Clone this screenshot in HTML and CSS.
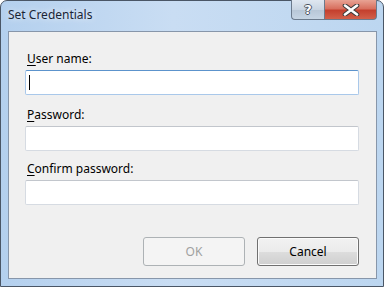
FILE: index.html
```html
<!DOCTYPE html>
<html>
<head>
<meta charset="utf-8">
<link rel="stylesheet" href="styles.css">
</head>
<body>
<div class="window">
  <div class="titlebar">
    <div class="title">Set Credentials</div>
    <div class="caption-buttons">
      <div class="cbtn help"><span class="help-glyph">?</span></div>
      <div class="cbtn close">
        <svg width="18" height="12" viewBox="0 0 18 12">
          <path d="M3 1.5 L15 10.5 M15 1.5 L3 10.5" stroke="#3c3c3c" stroke-width="4.6" stroke-linecap="round"/>
          <path d="M3 1.5 L15 10.5 M15 1.5 L3 10.5" stroke="#ffffff" stroke-width="2.6" stroke-linecap="round"/>
        </svg>
      </div>
    </div>
  </div>
  <div class="client">
    <div class="field f1">
      <label class="label"><u>U</u>ser name:</label>
      <div class="input focused"><span class="caret"></span></div>
    </div>
    <div class="field f2">
      <label class="label"><u>P</u>assword:</label>
      <div class="input"></div>
    </div>
    <div class="field f3">
      <label class="label"><u>C</u>onfirm password:</label>
      <div class="input"></div>
    </div>
    <div class="buttons">
      <div class="btn disabled">OK</div>
      <div class="btn">Cancel</div>
    </div>
  </div>
</div>
</body>
</html>
```
FILE: styles.css
```css
html, body {
  margin: 0;
  padding: 0;
  background: #ffffff;
}
body {
  width: 384px;
  height: 287px;
  overflow: hidden;
  font-family: "Noto Sans", "Open Sans", sans-serif;
  font-size: 12px;
}
.window {
  box-sizing: border-box;
  width: 384px;
  height: 287px;
  border: 1px solid #4a5666;
  border-radius: 7px 7px 0 0;
  background: linear-gradient(90deg, #b4d0ee 0%, #c9ddf3 45%, #bcd6f0 100%);
  display: flex;
  flex-direction: column;
  padding: 0 6px 7px 7px;
}
.titlebar {
  height: 30px;
  display: flex;
  justify-content: space-between;
  align-items: flex-start;
  flex: none;
}
.title {
  margin-top: 6px;
  color: #1a2536;
  font-size: 12px;
  line-height: 16px;
  text-shadow: 0 0 6px rgba(255,255,255,0.9);
}
.caption-buttons {
  display: flex;
  margin-top: -1px;
}
.cbtn {
  height: 20px;
  display: flex;
  align-items: center;
  justify-content: center;
  box-sizing: border-box;
  border: 1px solid #6b7a8c;
  border-top: none;
}
.help {
  width: 33px;
  border-radius: 0 0 0 4px;
  border-right: none;
  background: linear-gradient(180deg, #dfe7f0 0%, #c9d5e2 50%, #b7c6d6 51%, #c6d5e4 100%);
}
.help-glyph {
  font-family: "DejaVu Sans", sans-serif;
  font-weight: bold;
  font-size: 13px;
  color: #ffffff;
  line-height: 13px;
  text-shadow: -1px 0 #4a5360, 1px 0 #4a5360, 0 -1px #4a5360, 0 1px #4a5360;
}
.close {
  width: 53px;
  border-radius: 0 0 4px 0;
  background: linear-gradient(180deg, #e8a394 0%, #d8705f 45%, #c4402e 55%, #d2604a 100%);
}
.client {
  flex: 1;
  background: #f0f0f0;
  border: 1px solid #8796aa;
  padding: 19px 17px 0 16px;
  display: flex;
  flex-direction: column;
}
.field {
  display: flex;
  flex-direction: column;
}
.f1 { margin-bottom: 12px; }
.f2 { margin-bottom: 10px; }
.label {
  color: #000;
  line-height: 16px;
  margin-left: 2px;
  margin-bottom: 3px;
}
.label u {
  text-decoration-thickness: 1px;
  text-underline-offset: 2px;
}
.input {
  height: 23px;
  background: #ffffff;
  border: 1px solid #d6dbe2;
  border-top-color: #c2c6cc;
  border-radius: 2px;
  position: relative;
}
.input.focused {
  border-color: #a9c8ea;
  border-top-color: #5c93cc;
}
.caret {
  position: absolute;
  left: 3px;
  top: 4px;
  width: 1px;
  height: 15px;
  background: #000;
}
.buttons {
  margin-top: auto;
  margin-bottom: 12px;
  display: flex;
  justify-content: flex-end;
  gap: 12px;
}
.btn {
  box-sizing: border-box;
  width: 102px;
  height: 29px;
  border: 1px solid #707070;
  border-radius: 3px;
  background: linear-gradient(180deg, #f2f2f2 0%, #ebebeb 50%, #dddddd 51%, #cfcfcf 100%);
  box-shadow: inset 0 0 0 1px #fbfbfb;
  display: flex;
  align-items: center;
  justify-content: center;
  color: #000;
}
.btn.disabled {
  background: #f4f4f4;
  border-color: #adb2b5;
  box-shadow: none;
  color: #a0a0a0;
}
```
